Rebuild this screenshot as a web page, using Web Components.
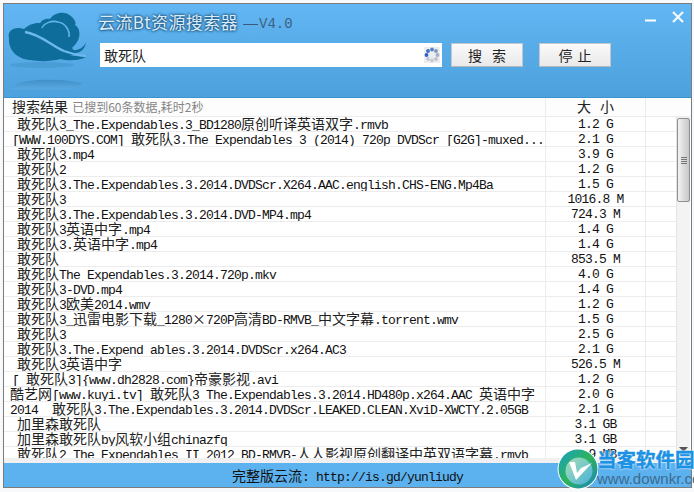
<!DOCTYPE html>
<html lang="zh"><head><meta charset="utf-8"><title>云流Bt资源搜索器</title>
<style>
html,body{margin:0;padding:0;background:#f7f9fb;width:694px;height:492px;overflow:hidden}
</style></head><body>
<app-window>
  <app-header></app-header>
  <file-list></file-list>
  <app-footer></app-footer>
</app-window>
<down-badge></down-badge>
<script>
const MONO='"Liberation Mono","DejaVu Sans Mono",monospace';
const CJK='"Noto Sans CJK SC","Noto Sans",sans-serif';
const mixStyle=`.l{font:13px/13px ${MONO};letter-spacing:-.8px}.c{font:14px/13px ${CJK};color:#222}`;
function mix(t){
  const esc=s=>s.replace(/&/g,'&amp;').replace(/</g,'&lt;');
  return t.split(/([\u3000-\u9fff\uff00-\uffef×]+)/).filter(Boolean)
    .map(p=>`<span class="${/[\u3000-\u9fff\uff00-\uffef×]/.test(p)?'c':'l'}">${esc(p)}</span>`).join('');
}
function def(name,html,setup){
  customElements.define(name,class extends HTMLElement{
    constructor(){super();this.attachShadow({mode:'open'});}
    connectedCallback(){this.shadowRoot.innerHTML=typeof html==='function'?html(this):html;if(setup)setup(this);}
  });
}
def('app-window',`<style>
:host{display:flex;flex-direction:column;box-sizing:border-box;width:689px;height:485px;margin:3px 0 0 3px;border:1px solid #7c7c7c;background:#fff;color:#000}
</style><slot></slot>`);

def('cloud-logo',`<style>:host{display:block;width:94px;height:93px;flex:none}svg{display:block}</style>
<svg width="94" height="93" viewBox="0 0 94 93">
<defs><linearGradient id="rf" x1="0" y1="0" x2="0" y2="1"><stop offset="0" stop-color="#3f8fc8"/><stop offset="1" stop-color="#5aa8e0"/></linearGradient></defs>
<ellipse cx="38" cy="61" rx="32" ry="3" fill="#3f8fc4" opacity=".45"/>
<path d="M36 21C36 16 42 14 46 15C50 8 62 6 68 13C72 17 72 20 71 21C76 24 77 32 73 38C70 43 66 46 62 46L52 30Z" fill="#0f6d9b"/>
<path d="M5 34C3 27 10 22 20 25C26 19 36 17 42 21C50 17 60 20 62 32C64 40 68 44 72 49C60 56 42 59 26 56C13 55 4 46 5 34Z" fill="#0f6d9b"/>
<path d="M38 24C40 19 48 16 54 18C61 19 66 26 65 33" fill="none" stroke="#62b4ea" stroke-width="1.6"/>
<path d="M60 50C68 52 76 52 82 53C75 57 64 57 56 55Z" fill="#0f6d9b"/>
<path d="M21 28C36 30 48 42 60 47C68 50 74 51 82 52" fill="none" stroke="#6cb8ec" stroke-width="2.4"/>
<path d="M68 46C75 47 80 43 82 38C81 46 76 49 70 49Z" fill="#0f6d9b"/>
<path d="M7 85C10 79 20 77 34 76C50 75 66 76 79 79C74 82 72 85 68 85Z" fill="url(#rf)"/>
</svg>`);

def('busy-spin',`<style>:host{display:block;width:16px;height:16px;flex:none}svg{display:block}</style>
<svg width="16" height="16"><rect width="16" height="16" fill="#eeeeee"/>
<circle cx="8" cy="2.5" r="1.9" fill="#5a82c8"/><circle cx="12" cy="4" r="1.9" fill="#7f97c4"/><circle cx="13.5" cy="8" r="1.9" fill="#a3b1cc"/><circle cx="12" cy="12" r="1.9" fill="#bcc4d2"/><circle cx="8" cy="13.5" r="1.9" fill="#c6cbd4"/><circle cx="4" cy="12" r="1.9" fill="#c4c9d3"/><circle cx="2.5" cy="8" r="1.9" fill="#2a62c8"/><circle cx="4" cy="4" r="1.9" fill="#3a6ec8"/></svg>`);

def('app-button',`<style>
:host{display:flex;align-items:center;justify-content:center;box-sizing:border-box;width:72px;height:24px;flex:none;background:linear-gradient(#fafafa,#e9e9e9);border:1px solid #c4c8cc;border-bottom-color:#b4b8bc;font:14px/1 ${CJK};color:#222;gap:var(--g,10px)}
</style><slot></slot>`);

def('app-header',`<style>
:host{display:flex;flex:none;height:94px;box-sizing:border-box;background:linear-gradient(#61b6f3,#4da2dd);border-bottom:1px solid #3f92cb}
.main{flex:1;display:flex;flex-direction:column;padding-top:6px;min-width:0}
.top{display:flex;height:28px;margin-bottom:5px}
.title{font:17px/24px ${CJK};color:#dcecf8;text-shadow:0 0 3px #1c5684,0 0 3px #1c5684,0 0 2px #24608f;letter-spacing:.4px;white-space:nowrap;height:24px}
.ver{font:14px/28px ${MONO};color:#3f5f80;margin-left:5px;white-space:pre;display:flex;align-items:center}
.ver i{display:inline-block;width:15px;height:1px;background:#3a5a78;margin-right:1px}
.ctl{margin-left:auto;flex:none;display:block}
.row{display:flex;padding-left:2px;align-items:center}
.inp{box-sizing:border-box;width:342px;height:24px;background:#fff;display:flex;align-items:center;justify-content:space-between;padding:0 2px 0 4px;margin-right:9px;font:14px/1 ${CJK};color:#222}
.b2{margin-left:16px;--g:5px}
</style>
<cloud-logo></cloud-logo>
<div class="main">
  <div class="top">
    <span class="title">云流Bt资源搜索器</span>
    <span class="ver"><i></i>V4.0</span>
    <svg class="ctl" width="48" height="20" viewBox="0 0 48 20"><path d="M2 10.5H13" stroke="#fff" stroke-width="2"/><path d="M30 2L40 12M40 2L30 12" stroke="#f4f9fd" stroke-width="2.2"/></svg>
  </div>
  <div class="row">
    <div class="inp"><span>敢死队</span><busy-spin></busy-spin></div>
    <app-button><span>搜</span><span>索</span></app-button>
    <app-button class="b2"><span>停</span><span>止</span></app-button>
  </div>
</div>`);

def('file-row',h=>`<style>${mixStyle}
:host{display:flex;height:15px;flex:none;box-sizing:border-box;border-bottom:1px solid #ececec;white-space:pre;color:#111;font-size:14px;line-height:13px}
.n{box-sizing:border-box;width:542px;flex:none;overflow:hidden;padding-left:${h.getAttribute('in')||13}px;border-right:1px solid #ececec;height:14px}
.s{box-sizing:border-box;width:100px;flex:none;text-align:center;height:14px;border-right:1px solid #ececec;overflow:hidden}
</style><div class="n">${mix(h.getAttribute('n'))}</div><div class="s">${mix(h.getAttribute('s'))}</div>`);

const DATA=[
[13,'敢死队3_The.Expendables.3_BD1280原创听译英语双字.rmvb','1.2 G'],
[8,'[WWW.100DYS.COM] 敢死队3.The Expendables 3 (2014) 720p DVDScr [G2G]-muxed...','2.1 G'],
[13,'敢死队3.mp4','3.9 G'],
[13,'敢死队2','1.2 G'],
[13,'敢死队3.The.Expendables.3.2014.DVDScr.X264.AAC.english.CHS-ENG.Mp4Ba','1.5 G'],
[13,'敢死队3','1016.8 M'],
[13,'敢死队3.The.Expendables.3.2014.DVD-MP4.mp4','724.3 M'],
[13,'敢死队3英语中字.mp4','1.4 G'],
[13,'敢死队3.英语中字.mp4','1.4 G'],
[13,'敢死队','853.5 M'],
[13,'敢死队The Expendables.3.2014.720p.mkv','4.0 G'],
[13,'敢死队3-DVD.mp4','1.4 G'],
[13,'敢死队3欧美2014.wmv','1.2 G'],
[13,'敢死队3_迅雷电影下载_1280×720P高清BD-RMVB_中文字幕.torrent.wmv','1.5 G'],
[13,'敢死队3','2.5 G'],
[13,'敢死队3.The.Expend ables.3.2014.DVDScr.x264.AC3','2.1 G'],
[13,'敢死队3英语中字','526.5 M'],
[8,'[ 敢死队3]{www.dh2828.com}帝豪影视.avi','1.2 G'],
[6,'酷艺网[www.kuyi.tv] 敢死队3 The.Expendables.3.2014.HD480p.x264.AAC 英语中字','2.0 G'],
[6,'2014  敢死队3.The.Expendables.3.2014.DVDScr.LEAKED.CLEAN.XviD-XWCTY.2.05GB','2.1 G'],
[13,'加里森敢死队','3.1 GB'],
[13,'加里森敢死队by风软小组chinazfq','3.1 GB'],
[13,'敢死队2_The_Expendables_II_2012_BD-RMVB-人人影视原创翻译中英双语字幕.rmvb','1.9 MB']
];
def('file-list',`<style>${mixStyle}
:host{display:flex;flex-direction:column;flex:none;height:360px;border-bottom:5px solid #f0f0f0;box-sizing:content-box;background:#fff}
.head{display:flex;flex:none;height:19px;box-sizing:border-box;border-bottom:1px solid #ececec;background:#fdfdfd;align-items:stretch}
.t{box-sizing:border-box;width:542px;flex:none;padding-left:8px;border-right:1px solid #ececec;font:14px/16px ${CJK};color:#222;white-space:nowrap}
.t small{font:12px/16px ${CJK};color:#858585;margin-left:1px}
.sz{box-sizing:border-box;width:100px;flex:none;text-align:center;font:14px/16px ${CJK};border-right:1px solid #ececec;color:#222}
.sz span{margin-left:9px}
.body{display:flex;flex:1;min-height:0}
.rows{width:672px;flex:none;overflow:hidden;display:flex;flex-direction:column}
.sb{flex:1;display:flex;flex-direction:column;background:#f3f3f3;border-left:1px solid #e4e4e4;margin-right:1px}
.th{box-sizing:border-box;height:84px;flex:none;margin:1px 0 0;background:linear-gradient(90deg,#f4f4f4,#dcdcdc 50%,#c8c8c8);border:1px solid #8e8e8e;border-radius:2px;display:flex;align-items:center;justify-content:center}
.g{width:6px;height:7px;background:repeating-linear-gradient(#777 0 1px,transparent 1px 2px)}
.ar{margin-top:auto;height:17px;display:flex;align-items:center;justify-content:center}
</style>
<div class="head"><div class="t">搜索结果 <small>已搜到60条数据,耗时2秒</small></div><div class="sz">大<span>小</span></div></div>
<div class="body"><div class="rows" id="r"></div>
<div class="sb"><div class="th"><div class="g"></div></div><div class="ar"><svg width="9" height="5"><path d="M0 0H9L4.5 5Z" fill="#555"/></svg></div></div></div>`,
h=>{const r=h.shadowRoot.getElementById('r');for(const d of DATA){const e=document.createElement('file-row');e.setAttribute('in',d[0]);e.setAttribute('n',d[1]);e.setAttribute('s',d[2]);r.append(e);}});

def('app-footer',`<style>${mixStyle}
:host{display:flex;flex:1;align-items:center;justify-content:center;background:#5cb1ef;color:#111;white-space:pre;padding-top:2px;font-size:14px;line-height:15px}
.l,.c{line-height:15px;color:#111}
</style><div>${mix('完整版云流: http://is.gd/yunliudy')}</div>`);

def('down-badge',`<style>
:host{position:absolute;left:556px;top:446px;width:140px;height:45px;display:flex;overflow:hidden}
svg{flex:none;display:block}
.tx{display:flex;flex-direction:column;margin-left:-1px}
.a{font:bold 19.5px/26px ${CJK};color:#1b92e4;-webkit-text-stroke:.4px #1b92e4;text-shadow:0 0 2px #fff,0 0 2px #fff;white-space:nowrap}
.b{font:15px/15px "Liberation Sans",sans-serif;color:#3d6c8e;white-space:nowrap;margin-top:-1px}
</style>
<svg width="42" height="45" viewBox="0 0 42 45"><defs><linearGradient id="wg" x1="0" y1="0" x2="1" y2="1"><stop offset="0" stop-color="#17a0c8"/><stop offset=".5" stop-color="#2eb35a"/><stop offset="1" stop-color="#1a82c6"/></linearGradient><linearGradient id="wi" x1="0" y1="0" x2="1" y2="1"><stop offset="0" stop-color="#a8e0b4"/><stop offset="1" stop-color="#46b0d8"/></linearGradient></defs>
<circle cx="22" cy="23" r="20.5" fill="#fff"/><circle cx="22" cy="23" r="19.5" fill="url(#wg)"/>
<circle cx="23" cy="25" r="13.5" fill="url(#wi)"/>
<path d="M13 16L20 34L36 17L25 22L21 27L19 16Z" fill="#fff"/></svg>
<div class="tx"><div class="a">当客软件园</div><div class="b">www.downkr.com</div></div>`);
</script>
</body></html>
